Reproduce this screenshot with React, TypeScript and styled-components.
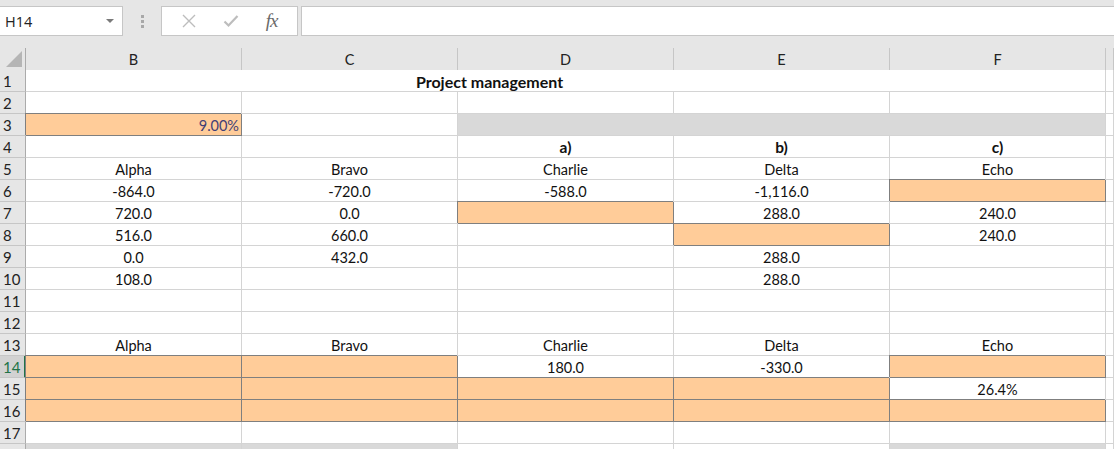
import React from 'react';
import styled, { createGlobalStyle } from 'styled-components';

const Global = createGlobalStyle`
  html, body { margin: 0; padding: 0; background: #e6e6e6; }
  #root { width: 1114px; height: 449px; overflow: hidden; }
`;

const Page = styled.div`
  width: 1114px;
  height: 449px;
  overflow: hidden;
  background: #e6e6e6;
  font-family: Lato, "Liberation Sans", sans-serif;
`;

const FormulaBar = styled.div`
  display: flex;
  align-items: stretch;
  height: 30px;
  padding: 6px 0 12px 0;
  box-sizing: content-box;
`;

const NameBox = styled.div`
  width: 123px;
  display: flex;
  align-items: center;
  justify-content: space-between;
  background: #fff;
  border: 1px solid #c6c6c6;
  border-left: none;
  box-sizing: border-box;
  padding: 0 8px 0 5px;
  font-family: "Open Sans", "Noto Sans", sans-serif;
  font-size: 14.5px;
  color: #222;
`;

const Caret = styled.span`
  width: 0;
  height: 0;
  border-left: 4px solid transparent;
  border-right: 4px solid transparent;
  border-top: 4px solid #7a7a7a;
`;

const Grip = styled.div`
  width: 38px;
  display: flex;
  flex-direction: column;
  align-items: center;
  justify-content: center;
  gap: 2px;
  span {
    width: 3px;
    height: 3px;
    background: #a8a8a8;
  }
`;

const FxBox = styled.div`
  width: 137px;
  display: flex;
  align-items: center;
  justify-content: space-around;
  background: #fff;
  border: 1px solid #c6c6c6;
  box-sizing: border-box;
  padding: 0 6px;
`;

const Fx = styled.span`
  font-family: "Liberation Serif", serif;
  font-style: italic;
  font-size: 19px;
  color: #6a6a6a;
  letter-spacing: -1px;
`;

const Input = styled.div`
  flex: 1;
  margin-left: 3px;
  background: #fff;
  border: 1px solid #c6c6c6;
  border-right: none;
`;

const Sheet = styled.div`
  display: grid;
  grid-template-columns: 26px repeat(5, 216px) 1fr;
  grid-auto-rows: 22px;
  background: #fff;
`;

const Corner = styled.div`
  background: #e6e6e6;
  border-right: 1px solid #ababab;
  border-bottom: 1px solid #ababab;
  height: 23px;
  box-sizing: border-box;
  display: flex;
  align-items: flex-end;
  justify-content: flex-end;
  padding: 0 3px 3px 0;
`;

const ColHead = styled.div`
  height: 23px;
  box-sizing: border-box;
  background: #e6e6e6;
  border-right: 1px solid #c6c6c6;
  border-bottom: 1px solid #ababab;
  display: flex;
  align-items: center;
  justify-content: center;
  padding-top: 1px;
  font-size: 14.5px;
  color: #222;
`;

const RowHead = styled.div<{ $active?: boolean }>`
  box-sizing: border-box;
  background: ${p => (p.$active ? '#d2d2d2' : '#e6e6e6')};
  color: ${p => (p.$active ? '#217346' : '#222')};
  border-right: ${p => (p.$active ? '2px solid #217346' : '1px solid #ababab')};
  border-bottom: 1px solid #c6c6c6;
  display: flex;
  align-items: center;
  padding: 1px 0 0 3px;
  font-size: 15px;
`;

const Cell = styled.div<{ $span?: number; $fill?: string; $boxed?: boolean; $bold?: boolean; $right?: boolean }>`
  grid-column: span ${p => p.$span || 1};
  box-sizing: border-box;
  position: relative;
  z-index: ${p => (p.$boxed ? 1 : 0)};
  background: ${p => p.$fill || '#fff'};
  border-right: 1px solid ${p => (p.$boxed ? '#7f7f7f' : '#d4d4d4')};
  border-bottom: 1px solid ${p => (p.$boxed ? '#7f7f7f' : '#d4d4d4')};
  box-shadow: ${p => (p.$boxed ? '-1px -1px 0 0 #7f7f7f' : 'none')};
  display: flex;
  align-items: center;
  justify-content: ${p => (p.$right ? 'flex-end' : 'center')};
  padding: 1px 2px 0 2px;
  font-size: ${p => (p.$bold ? '15.5px' : '14.5px')};
  font-weight: ${p => (p.$bold ? 700 : 400)};
  color: ${p => (p.$boxed ? '#3f3f76' : '#111')};
  white-space: nowrap;
`;

const Title = styled(Cell)`
  padding-right: 154px;
  font-size: 16px;
`;

const ORANGE = '#ffcc99';
const GRAY = '#d9d9d9';

type C = { t?: string; box?: boolean; bold?: boolean; right?: boolean; fill?: string };

const o: C = { box: true, fill: ORANGE };
const e: C = {};

const names: C[] = [{ t: 'Alpha' }, { t: 'Bravo' }, { t: 'Charlie' }, { t: 'Delta' }, { t: 'Echo' }];

const rows: Record<number, C[]> = {
  2: [e, e, e, e, e],
  4: [e, e, { t: 'a)', bold: true }, { t: 'b)', bold: true }, { t: 'c)', bold: true }],
  5: names,
  6: [{ t: '-864.0' }, { t: '-720.0' }, { t: '-588.0' }, { t: '-1,116.0' }, o],
  7: [{ t: '720.0' }, { t: '0.0' }, o, { t: '288.0' }, { t: '240.0' }],
  8: [{ t: '516.0' }, { t: '660.0' }, e, o, { t: '240.0' }],
  9: [{ t: '0.0' }, { t: '432.0' }, e, { t: '288.0' }, e],
  10: [{ t: '108.0' }, e, e, { t: '288.0' }, e],
  11: [e, e, e, e, e],
  12: [e, e, e, e, e],
  13: names,
  14: [o, o, { t: '180.0' }, { t: '-330.0' }, o],
  15: [o, o, o, o, { t: '26.4%' }],
  16: [o, o, o, o, o],
  17: [e, e, e, e, e],
  18: [{ fill: GRAY }, { fill: GRAY }, e, e, { fill: GRAY }],
};

const XIcon = () => (
  <svg width="14" height="14" viewBox="0 0 14 14">
    <path d="M1 1L13 13M13 1L1 13" stroke="#bdbdbd" strokeWidth="1.4" fill="none" />
  </svg>
);

const CheckIcon = () => (
  <svg width="16" height="14" viewBox="0 0 16 14">
    <path d="M1.5 7.5L5.5 11.5L14.5 2" stroke="#bdbdbd" strokeWidth="2.2" fill="none" />
  </svg>
);

const SelectAll = () => (
  <svg width="16" height="16" viewBox="0 0 16 16">
    <path d="M16 0V16H0Z" fill="#b5b5b5" />
  </svg>
);

const renderCells = (cells: C[]) =>
  cells.map((c, i) => (
    <Cell key={i} $boxed={c.box} $fill={c.fill} $bold={c.bold} $right={c.right}>
      {c.t}
    </Cell>
  ));

export default function App() {
  const body: React.ReactNode[] = [];
  for (let r = 1; r <= 18; r++) {
    // row 18 is cut by the window edge, its number is out of view
    body.push(
      <RowHead key={`h${r}`} $active={r === 14}>
        {r < 18 ? r : ''}
      </RowHead>
    );
    if (r === 1) {
      body.push(
        <Title key="title" $span={5} $bold>
          Project management
        </Title>
      );
    } else if (r === 3) {
      body.push(
        <Cell key="b3" $boxed $fill={ORANGE} $right>
          9.00%
        </Cell>,
        <Cell key="c3" />,
        <Cell key="d3" $span={3} $fill={GRAY} />
      );
    } else {
      body.push(<React.Fragment key={`r${r}`}>{renderCells(rows[r])}</React.Fragment>);
    }
    body.push(<Cell key={`g${r}`} />);
  }

  return (
    <Page>
      <Global />
      <FormulaBar>
        <NameBox>
          H14
          <Caret />
        </NameBox>
        <Grip>
          <span />
          <span />
          <span />
        </Grip>
        <FxBox>
          <XIcon />
          <CheckIcon />
          <Fx>fx</Fx>
        </FxBox>
        <Input />
      </FormulaBar>
      <Sheet>
        <Corner>
          <SelectAll />
        </Corner>
        {['B', 'C', 'D', 'E', 'F', ''].map(l => (
          <ColHead key={l || 'G'}>{l}</ColHead>
        ))}
        {body}
      </Sheet>
    </Page>
  );
}
